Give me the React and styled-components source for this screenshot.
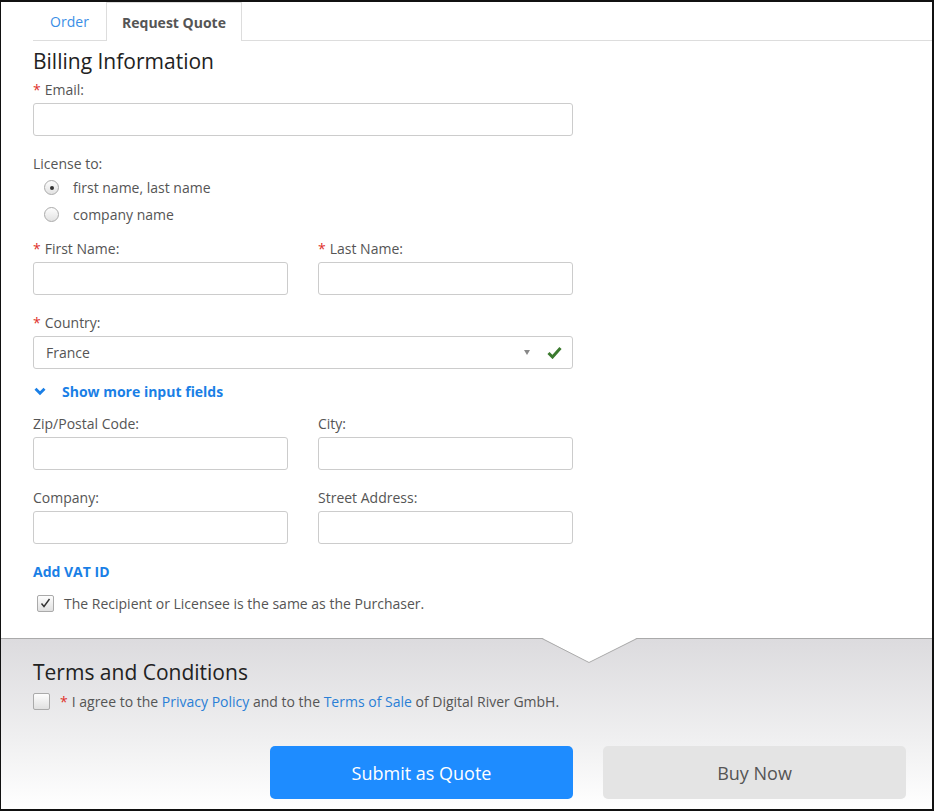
import React from 'react';
import styled, { createGlobalStyle } from 'styled-components';

const GlobalStyle = createGlobalStyle`
  html, body {
    margin: 0;
    padding: 0;
    background: #fff;
  }
  body {
    font-family: "Open Sans", "Liberation Sans", sans-serif;
    color: #555;
  }
  * {
    box-sizing: border-box;
  }
`;

const Frame = styled.div`
  width: 934px;
  height: 811px;
  border: 2px solid #111;
  border-left-width: 1px;
  display: flex;
  flex-direction: column;
  overflow: hidden;
  background: #fff;
`;

const TopSection = styled.div`
  padding-left: 32px;
  height: 636px;
`;

const TabBar = styled.div`
  display: flex;
  height: 39px;
  border-bottom: 1px solid #ddd;
`;

const Tab = styled.div`
  display: flex;
  align-items: center;
  justify-content: center;
  white-space: nowrap;
  font-size: 14px;
  color: ${(p) => (p.$active ? '#555' : '#3a8ee6')};
  font-weight: ${(p) => (p.$active ? 700 : 400)};
  background: #fff;
  border: 1px solid ${(p) => (p.$active ? '#ddd' : 'transparent')};
  border-bottom: none;
  margin-bottom: ${(p) => (p.$active ? '-1px' : '0')};
  width: ${(p) => p.$w}px;
`;

const Form = styled.div`
  width: 540px;
`;

const Heading = styled.h2`
  margin: 5px 0 0;
  font-size: 21px;
  line-height: 30px;
  font-weight: 400;
  color: #222;
`;

const Label = styled.div`
  font-size: 14px;
  line-height: 20px;
  padding-top: 1px;
  color: #555;
  margin-top: ${(p) => p.$mt || 0}px;
`;

const Req = styled.span`
  color: #e0322b;
  margin-right: 4px;
`;

const Input = styled.div`
  height: 33px;
  margin-top: 3px;
  border: 1px solid #ccc;
  border-radius: 3px;
  background: #fff;
`;

const Grid = styled.div`
  display: grid;
  grid-template-columns: 255px 255px;
  column-gap: 30px;
  margin-top: ${(p) => p.$mt || 0}px;
`;

const RadioRow = styled.label`
  display: flex;
  align-items: center;
  height: 27px;
  padding-left: 11px;
  font-size: 14px;
  color: #555;
`;

const RadioDot = styled.span`
  width: 15px;
  height: 15px;
  border-radius: 50%;
  border: 1px solid #aaa;
  background: linear-gradient(#fdfdfd, #e2e2e2);
  margin-right: 14px;
  display: flex;
  align-items: center;
  justify-content: center;
  &::after {
    content: '';
    width: 4px;
    height: 4px;
    border-radius: 50%;
    background: ${(p) => (p.$checked ? '#333' : 'transparent')};
  }
`;

const Select = styled.div`
  height: 33px;
  margin-top: 3px;
  border: 1px solid #ccc;
  border-radius: 3px;
  display: flex;
  align-items: center;
  padding: 0 10px 0 12px;
  font-size: 14px;
  color: #555;
`;

const SelectValue = styled.span`
  flex: 1;
`;

const Caret = styled.span`
  width: 0;
  height: 0;
  border-left: 3.5px solid transparent;
  border-right: 3.5px solid transparent;
  border-top: 5px solid #888;
  margin-right: 17px;
`;

const Toggle = styled.div`
  display: flex;
  align-items: center;
  height: 20px;
  margin-top: 12px;
  font-size: 14px;
  font-weight: 700;
  color: #1a7fe6;
  svg {
    margin: 0 16px 0 1px;
  }
`;

const LinkText = styled.div`
  height: 20px;
  line-height: 20px;
  margin-top: ${(p) => p.$mt || 0}px;
  font-size: 14px;
  font-weight: 700;
  color: #1a7fe6;
`;

const CheckRow = styled.label`
  display: flex;
  align-items: center;
  height: 20px;
  margin-top: ${(p) => p.$mt || 0}px;
  padding-left: ${(p) => p.$pl || 0}px;
  font-size: 14px;
  color: #555;
`;

const Box = styled.span`
  width: 17px;
  height: 17px;
  border: 1px solid #aaa;
  border-radius: 2px;
  background: linear-gradient(#fdfdfd, #e0e0e0);
  margin-right: ${(p) => p.$mr || 10}px;
  display: flex;
  align-items: center;
  justify-content: center;
  flex-shrink: 0;
`;

const BottomSection = styled.div`
  position: relative;
  flex: 1;
  border-top: 1px solid #aaa;
  background: linear-gradient(#dcdbde 0%, #f0f0f1 60%, #fff 100%);
  padding: 18px 0 0 32px;
`;

const Notch = styled.svg`
  position: absolute;
  top: -1px;
  left: 541px;
`;

const TermsHeading = styled.h2`
  margin: 0;
  font-size: 21px;
  line-height: 30px;
  font-weight: 400;
  color: #222;
`;

const TermsText = styled.span`
  a {
    color: #2a7fd6;
    text-decoration: none;
  }
`;

const Buttons = styled.div`
  display: flex;
  justify-content: flex-end;
  gap: 30px;
  margin-top: 35px;
  padding-right: 26px;
`;

const Button = styled.button`
  width: 303px;
  height: 53px;
  border: none;
  border-radius: 5px;
  font-family: "Open Sans", "Liberation Sans", sans-serif;
  font-size: 18px;
  background: ${(p) => (p.$primary ? '#1e8cff' : '#e4e4e4')};
  color: ${(p) => (p.$primary ? '#fff' : '#555')};
`;

function Field({ label, required }) {
  return (
    <div>
      <Label>
        {required && <Req>*</Req>}
        {label}
      </Label>
      <Input />
    </div>
  );
}

export default function App() {
  return (
    <Frame>
      <GlobalStyle />
      <TopSection>
        <TabBar>
          <Tab $w={73}>Order</Tab>
          <Tab $active $w={136}>Request Quote</Tab>
        </TabBar>
        <Form>
          <Heading>Billing Information</Heading>
          <Label $mt={3}>
            <Req>*</Req>Email:
          </Label>
          <Input />

          <Label $mt={17}>License to:</Label>
          <RadioRow>
            <RadioDot $checked />
            first name, last name
          </RadioRow>
          <RadioRow>
            <RadioDot />
            company name
          </RadioRow>

          <Grid $mt={10}>
            <Field label="First Name:" required />
            <Field label="Last Name:" required />
          </Grid>

          <Label $mt={17}>
            <Req>*</Req>Country:
          </Label>
          <Select>
            <SelectValue>France</SelectValue>
            <Caret />
            <svg width="15" height="13" viewBox="0 0 15 13">
              <path d="M1.5 7 L5.5 11 L13.5 2" fill="none" stroke="#3b7a2e" strokeWidth="3" />
            </svg>
          </Select>

          <Toggle>
            <svg width="12" height="9" viewBox="0 0 12 9">
              <path d="M1.5 1.8 L6 6.3 L10.5 1.8" fill="none" stroke="#1a7fe6" strokeWidth="2.8" />
            </svg>
            Show more input fields
          </Toggle>

          <Grid $mt={12}>
            <Field label="Zip/Postal Code:" />
            <Field label="City:" />
          </Grid>
          <Grid $mt={17}>
            <Field label="Company:" />
            <Field label="Street Address:" />
          </Grid>

          <LinkText $mt={18}>Add VAT ID</LinkText>
          <CheckRow $mt={11} $pl={4}>
            <Box>
              <svg width="11" height="10" viewBox="0 0 11 10">
                <path d="M1.5 5.5 L4 8.5 L9.5 1" fill="none" stroke="#333" strokeWidth="1.4" />
              </svg>
            </Box>
            The Recipient or Licensee is the same as the Purchaser.
          </CheckRow>
        </Form>
      </TopSection>

      <BottomSection>
        <Notch width="96" height="26" viewBox="0 0 96 26">
          <path d="M0 0 L47 24.5 L95 0 Z" fill="#fff" />
          <path d="M0 0.5 L47 24.5 L95 0.5" fill="none" stroke="#aaa" strokeWidth="1" />
        </Notch>
        <TermsHeading>Terms and Conditions</TermsHeading>
        <CheckRow $mt={4}>
          <Box $mr={10} />
          <TermsText>
            <Req>*</Req>I agree to the <a>Privacy Policy</a> and to the <a>Terms of Sale</a> of Digital
            River GmbH.
          </TermsText>
        </CheckRow>
        <Buttons>
          <Button $primary>Submit as Quote</Button>
          <Button>Buy Now</Button>
        </Buttons>
      </BottomSection>
    </Frame>
  );
}
